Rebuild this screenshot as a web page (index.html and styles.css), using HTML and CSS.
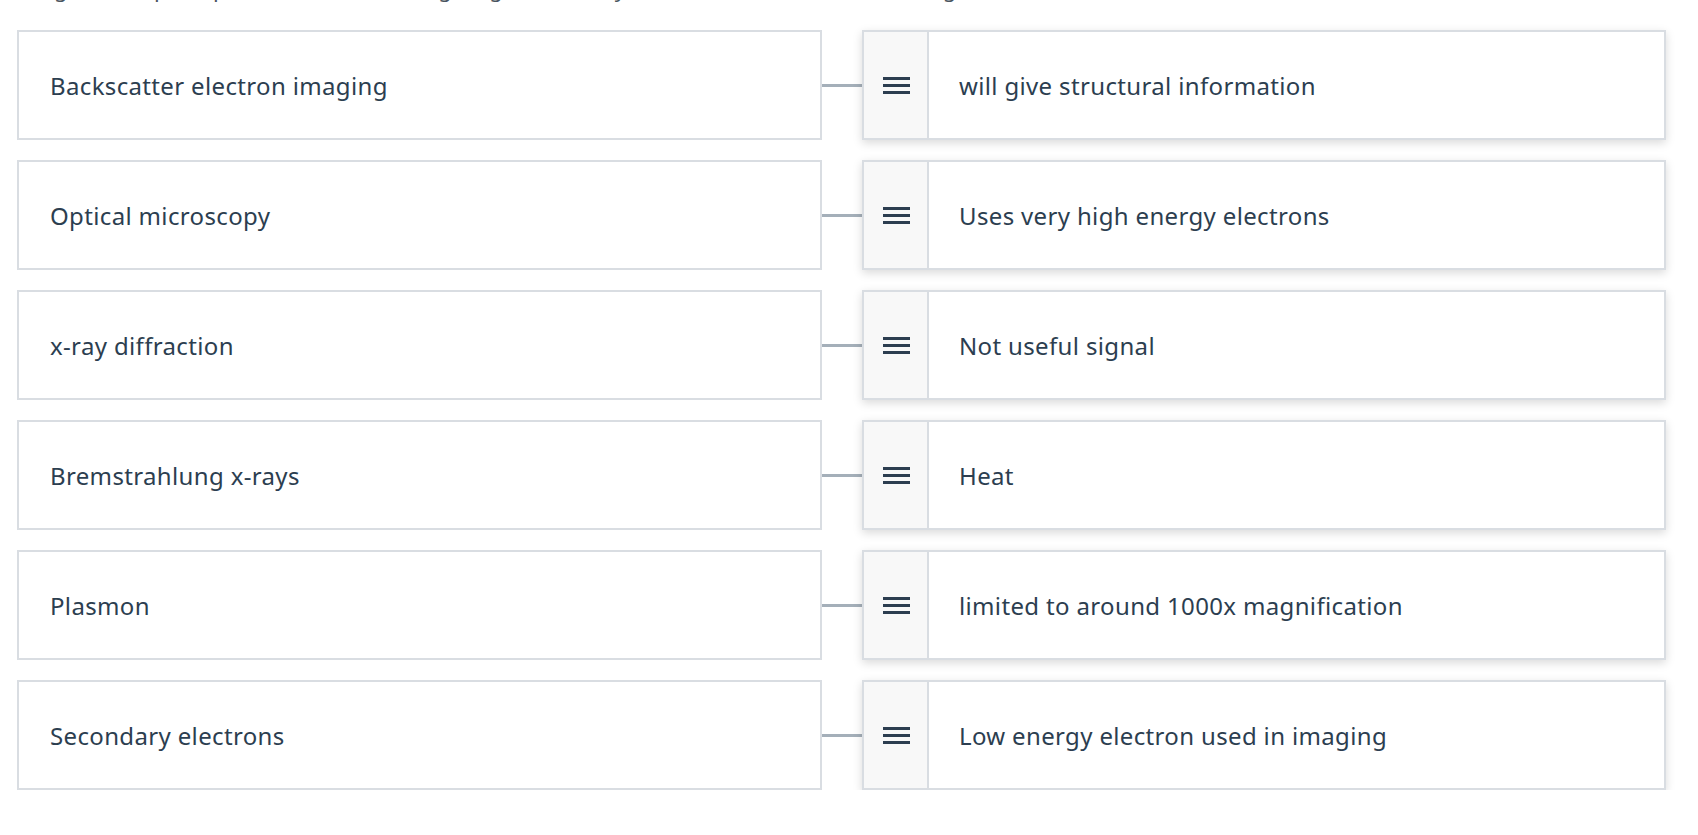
FILE: index.html
```html
<!DOCTYPE html>
<html>
<head>
<meta charset="utf-8">
<link rel="stylesheet" href="styles.css">
</head>
<body>
<div class="page">
  <p class="intro">Drag and drop the pairs to match each signal generated by the electron beam with its usage.</p>
  <div class="rows">
    <div class="row">
      <div class="term">Backscatter electron imaging</div>
      <div class="link"></div>
      <div class="answer"><div class="handle"><span class="bars"><i></i><i></i><i></i></span></div><div class="atext">will give structural information</div></div>
    </div>
    <div class="row">
      <div class="term">Optical microscopy</div>
      <div class="link"></div>
      <div class="answer"><div class="handle"><span class="bars"><i></i><i></i><i></i></span></div><div class="atext">Uses very high energy electrons</div></div>
    </div>
    <div class="row">
      <div class="term">x-ray diffraction</div>
      <div class="link"></div>
      <div class="answer"><div class="handle"><span class="bars"><i></i><i></i><i></i></span></div><div class="atext">Not useful signal</div></div>
    </div>
    <div class="row">
      <div class="term">Bremstrahlung x-rays</div>
      <div class="link"></div>
      <div class="answer"><div class="handle"><span class="bars"><i></i><i></i><i></i></span></div><div class="atext">Heat</div></div>
    </div>
    <div class="row">
      <div class="term">Plasmon</div>
      <div class="link"></div>
      <div class="answer"><div class="handle"><span class="bars"><i></i><i></i><i></i></span></div><div class="atext">limited to around 1000x magnification</div></div>
    </div>
    <div class="row">
      <div class="term">Secondary electrons</div>
      <div class="link"></div>
      <div class="answer"><div class="handle"><span class="bars"><i></i><i></i><i></i></span></div><div class="atext">Low energy electron used in imaging</div></div>
    </div>
  </div>
</div>
</body>
</html>
```

FILE: styles.css
```css
html, body {
  margin: 0;
  padding: 0;
  background: #ffffff;
}
body {
  font-family: "Source Sans Pro", "Noto Sans", "Liberation Sans", sans-serif;
  color: #2c3e50;
  overflow: hidden;
}
.page {
  padding: 0 32px 0 17px;
}
.intro {
  margin: -27px 0 0 0;
  height: 30px;
  line-height: 30px;
  font-size: 22px;
  color: #4a5560;
  white-space: nowrap;
  overflow: hidden;
}
.rows {
  display: flex;
  flex-direction: column;
  gap: 20px;
  margin-top: 27px;
}
.row {
  display: flex;
  align-items: center;
  height: 110px;
}
.term {
  box-sizing: border-box;
  width: 805px;
  height: 110px;
  border: 2px solid #d9dde2;
  display: flex;
  align-items: center;
  padding-left: 31px;
  font-size: 24px;
  letter-spacing: 0.35px;
}
.link {
  width: 40px;
  height: 3px;
  background: #a4afb9;
}
.answer {
  box-sizing: border-box;
  width: 804px;
  height: 110px;
  border: 2px solid #d9dde2;
  display: flex;
  box-shadow: 0 3px 9px rgba(0, 0, 0, 0.15);
  background: #fff;
}
.handle {
  width: 63px;
  background: #f8f8f8;
  border-right: 2px solid #d9dde2;
  display: flex;
  align-items: center;
  justify-content: center;
}
.bars {
  display: flex;
  flex-direction: column;
  gap: 4px;
  width: 27px;
  margin-left: 2px;
}
.bars i {
  display: block;
  height: 3px;
  background: #2c3e50;
}
.atext {
  display: flex;
  align-items: center;
  padding-left: 30px;
  font-size: 24px;
  letter-spacing: 0.35px;
}
```
